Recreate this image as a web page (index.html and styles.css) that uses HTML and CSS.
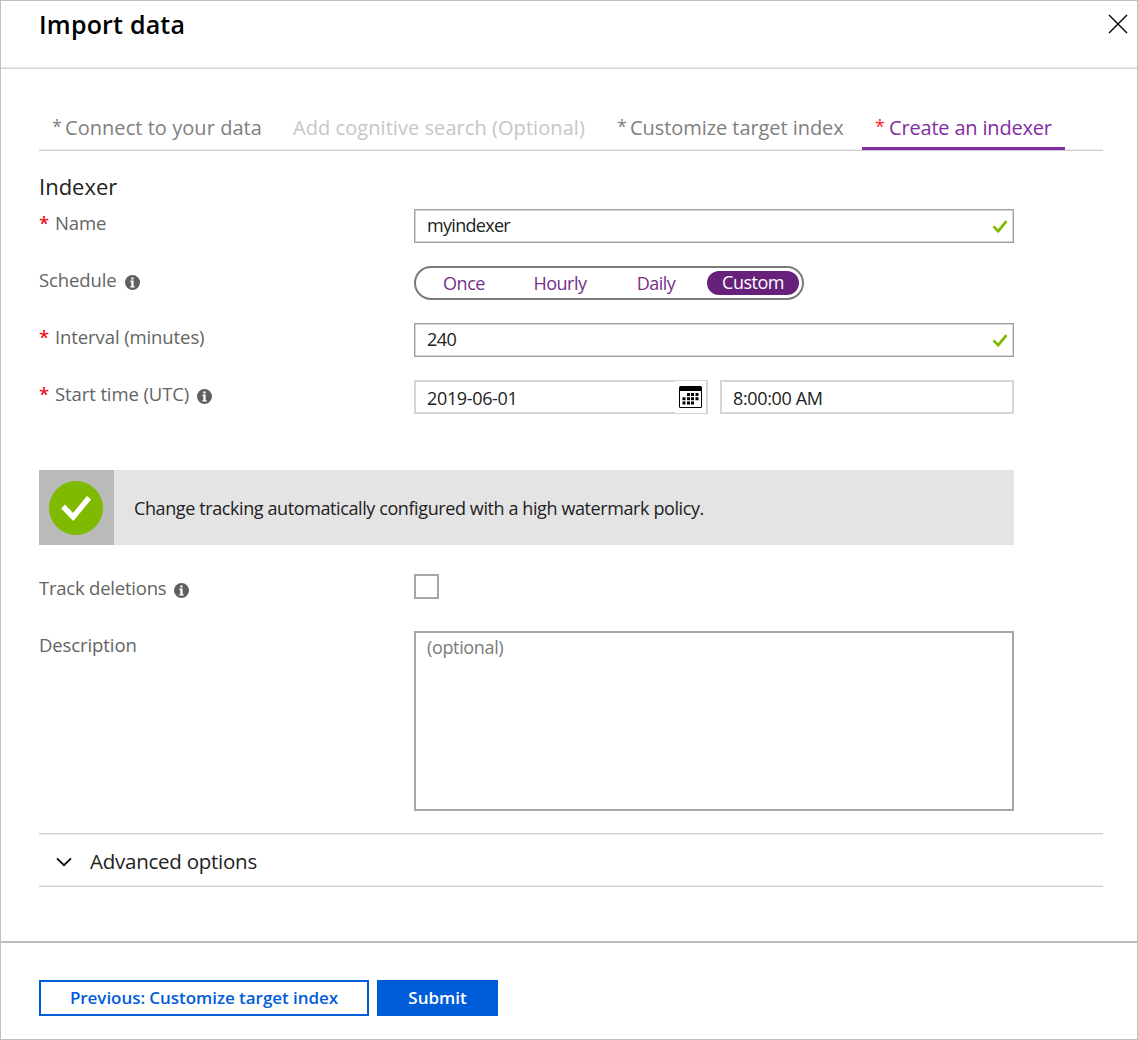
FILE: index.html
```html
<!DOCTYPE html>
<html lang="en">
<head>
<meta charset="utf-8">
<title>Import data</title>
<link rel="stylesheet" href="styles.css">
</head>
<body>
<svg class="defs" width="0" height="0" aria-hidden="true">
  <symbol id="info" viewBox="0 0 15 15">
    <circle cx="7.5" cy="7.5" r="7.5" fill="#5f5f5f"/>
    <path d="M6.3 2.4h2.3v2H6.3zM5.3 5.6h3.3v5.6h1.1v1.2H5.3v-1.2h1V6.8h-1z" fill="#fff"/>
  </symbol>
  <symbol id="tick" viewBox="0 0 16 14">
    <path d="M1.4 6.4 6.2 11.2 14.4 1.2" fill="none" stroke="#7fba00" stroke-width="2.7"/>
  </symbol>
</svg>
<div class="blade">
  <header class="header">
    <h1 class="title">Import data</h1>
    <svg class="close" width="20" height="20" viewBox="0 0 20 20"><path d="M1 1 19 19M19 1 1 19" stroke="#000" stroke-width="1.4"/></svg>
  </header>
  <main class="content">
    <nav class="tabs">
      <a class="tab tab-connect"><span class="star">*</span><span>Connect to your data</span></a>
      <a class="tab tab-cognitive"><span>Add cognitive search (Optional)</span></a>
      <a class="tab tab-customize"><span class="star">*</span><span>Customize target index</span></a>
      <a class="tab tab-active"><span class="star">*</span><span>Create an indexer</span></a>
    </nav>
    <h2 class="section">Indexer</h2>
    <form class="form">
      <div class="row">
        <label class="label"><span class="required">*</span><span>Name</span></label>
        <div class="input"><span class="input-name">myindexer</span><svg class="valid" width="16" height="14"><use href="#tick"/></svg></div>
      </div>
      <div class="row">
        <label class="label"><span>Schedule</span><svg class="info" width="15" height="15"><use href="#info"/></svg></label>
        <div class="options">
          <span class="option">Once</span><span class="option">Hourly</span><span class="option">Daily</span><span class="option selected">Custom</span>
        </div>
      </div>
      <div class="row">
        <label class="label"><span class="required">*</span><span>Interval (minutes)</span></label>
        <div class="input"><span>240</span><svg class="valid" width="16" height="14"><use href="#tick"/></svg></div>
      </div>
      <div class="row">
        <label class="label"><span class="required">*</span><span>Start time (UTC)</span><svg class="info" width="15" height="15"><use href="#info"/></svg></label>
        <div class="datetime">
          <div class="picker"><span class="picker-text">2019-06-01</span>
            <span class="calendar"><svg width="23" height="22" viewBox="0 0 23 22">
              <rect width="23" height="22" rx="1.5" fill="#000"/>
              <path d="M1 5h21v16H1z" fill="#fff"/>
              <path d="M8 7h3v3H8zM12 7h3v3h-3zM16.5 7h3v3h-3zM3.5 11.2h3v3h-3zM8 11.2h3v3H8zM12 11.2h3v3h-3zM16.5 11.2h3v3h-3zM3.5 15.5h3v3h-3zM8 15.5h3v3H8zM12 15.5h3v3h-3z" fill="#000"/>
            </svg></span>
          </div>
          <div class="picker"><span class="picker-text">8:00:00 AM</span></div>
        </div>
      </div>
      <div class="banner">
        <div class="banner-icon"><svg width="54" height="54" viewBox="0 0 54 54"><circle cx="27" cy="27" r="27" fill="#7fba00"/><path d="M14 25.5 24.2 36 40 16.8" fill="none" stroke="#fff" stroke-width="5.4"/></svg></div>
        <p class="banner-text">Change tracking automatically configured with a high watermark policy.</p>
      </div>
      <div class="row">
        <label class="label label-track"><span>Track deletions</span><svg class="info" width="15" height="15"><use href="#info"/></svg></label>
        <div class="checkbox"></div>
      </div>
      <div class="row">
        <label class="label"><span>Description</span></label>
        <div class="textarea">(optional)</div>
      </div>
    </form>
    <div class="accordion">
      <svg width="16" height="10" viewBox="0 0 16 10"><path d="M1 1.4 8 8.2 15 1.4" fill="none" stroke="#000" stroke-width="1.7"/></svg>
      <span class="accordion-text">Advanced options</span>
    </div>
  </main>
  <footer class="footer">
    <button class="button previous">Previous: Customize target index</button>
    <button class="button submit">Submit</button>
  </footer>
</div>
</body>
</html>
```
FILE: styles.css
```css
* { box-sizing: border-box; }
body { margin: 0; background: #fff; font-family: "Open Sans", "Noto Sans", sans-serif; font-size: 18px; color: #222; }
.defs { display: block; height: 0; }
.blade { width: 1138px; height: 1040px; border: 1px solid #c0c0c0; display: flex; flex-direction: column; overflow: hidden; }
.header { height: 68px; flex: none; display: flex; justify-content: space-between; align-items: flex-start; padding: 0 9px 0 38px; border-bottom: 1px solid #d0d0d0; box-shadow: inset 0 -1px #ebebeb; }
.title { margin: 5px 0 0; font-size: 25px; line-height: 36px; font-weight: 600; letter-spacing: 0.2px; color: #000; white-space: nowrap; }
.close { margin-top: 13px; }
.content { flex: none; height: 872px; padding: 40px 34px 0 38px; }
.tabs { display: flex; height: 42px; border-bottom: 1px solid #d0d0d0; box-shadow: inset 0 -1px #ebebeb; font-size: 20px; line-height: 38px; color: #808080; white-space: nowrap; }
.tab { display: flex; height: 41px; padding-left: 13px; }
.star { width: 13px; font-size: 18px; line-height: 34px; }
.tab-connect { width: 241px; letter-spacing: 0.05px; }
.tab-cognitive { width: 325px; color: #c6c6c6; letter-spacing: 0.06px; }
.tab-customize { width: 257px; padding-left: 12px; letter-spacing: -0.06px; }
.tab-active { width: 203px; letter-spacing: -0.18px; color: #832da4; border-bottom: 3px solid #832da4; }
.tab-active .star { width: 14px; color: #f22; }
.section { margin: 18px 0 0; font-size: 22px; font-weight: 400; line-height: 34px; height: 40px; }
.row { display: grid; grid-template-columns: 375px 600px; height: 57px; }
.label { display: flex; height: 28px; line-height: 28px; font-size: 18.5px; letter-spacing: -0.1px; color: #646464; white-space: nowrap; }
.label-track { letter-spacing: -0.22px; }
.required { width: 16px; color: #e81123; font-weight: 600; }
.info { margin: 9px 0 0 8px; }
.input { display: flex; justify-content: space-between; align-items: center; height: 34px; border: 1px solid #a0a0a0; box-shadow: inset 0 0 0 1px #d4d4d4; padding: 0 5px 3px 12px; letter-spacing: -0.6px; }
.input-name { letter-spacing: -0.7px; }
.valid { margin-top: 5px; }
.options { display: flex; align-items: center; width: 390px; height: 34px; padding: 0 3px 0 0; border: 2px solid #7a7a7a; border-radius: 17px; color: #75308a; letter-spacing: -0.5px; }
.option { width: 96px; line-height: 23px; text-align: center; }
.selected { width: 92px; height: 24px; margin-left: 3px; border-radius: 12px; background: #68217a; color: #fff; letter-spacing: -0.5px; }
.datetime { display: flex; gap: 12px; }
.picker { display: flex; justify-content: space-between; align-items: center; width: 294px; height: 34px; border: 2px solid #d5d5d5; padding-left: 11px; letter-spacing: -0.35px; }
.picker-text { padding-top: 2px; }
.calendar { display: flex; align-items: center; width: 31px; height: 32px; padding-left: 4px; background: #fff; }
.banner { display: flex; width: 975px; height: 75px; margin: 33px 0 29px; background: #e4e4e4; }
.banner-icon { display: flex; align-items: center; width: 75px; padding-left: 10px; background: #bababa; }
.banner-text { margin: 0; padding-left: 20px; line-height: 77px; letter-spacing: -0.4px; white-space: nowrap; }
.checkbox { width: 25px; height: 25px; border: 2px solid #a6a6a6; }
.textarea { width: 600px; height: 180px; border: 2px solid #a6a6a6; padding: 0 11px; line-height: 28px; letter-spacing: -0.35px; color: #7b7b7b; }
.accordion { display: flex; align-items: center; gap: 18px; height: 54px; margin-top: 145px; padding: 3px 0 0 17px; border-top: 1px solid #d0d0d0; border-bottom: 1px solid #d0d0d0; box-shadow: inset 0 1px #ebebeb, inset 0 -1px #ebebeb; font-size: 20.5px; letter-spacing: -0.25px; }
.accordion-text { padding-bottom: 2px; }
.footer { flex: none; display: flex; gap: 8px; height: 98px; padding: 37px 38px 0; border-top: 2px solid #bdbdbd; }
.button { height: 36px; padding: 0; font: 600 17px/30px "Open Sans", "Noto Sans", sans-serif; border: 2px solid #015cda; white-space: nowrap; }
.previous { width: 330px; background: #fff; color: #015cda; letter-spacing: -0.05px; }
.submit { width: 121px; background: #015cda; color: #fff; }
```
